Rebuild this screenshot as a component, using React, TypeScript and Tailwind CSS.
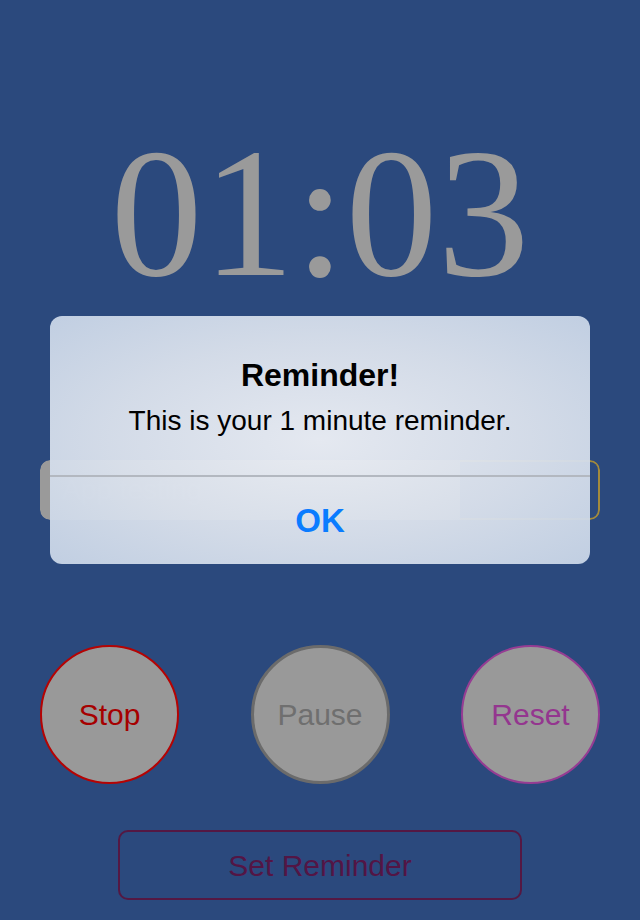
import React from "react";

export default function App() {
  const sans = { fontFamily: '"Liberation Sans", Arial, Helvetica, sans-serif' };
  return (
    <div className="relative w-[640px] h-[920px] bg-[#2b497d] overflow-hidden" style={sans}>
      <div className="flex flex-col items-center">
        <div
          className="mt-[118px] h-[190px] flex items-center justify-center text-[184px] leading-none text-[#9a9a9a]"
          style={{ fontFamily: '"Liberation Serif", "DejaVu Serif", serif' }}
        >
          01:03
        </div>

        <div className="mt-[152px] w-[560px] h-[60px] flex rounded-[10px] overflow-hidden">
          <div className="flex-1 flex items-center bg-[#9a9a9a] rounded-l-[10px] pl-[22px] text-[28px] text-[#a9a9a9]">
            App testing
          </div>
          <div className="w-[140px] border-2 border-l-0 border-[#a38a3c] rounded-r-[10px]" />
        </div>

        <div className="mt-[125px] w-[560px] flex justify-between">
          <div className="w-[139px] h-[139px] rounded-full bg-[#999999] border-2 border-[#b50303] flex items-center justify-center text-[30px] text-[#a60000]">
            Stop
          </div>
          <div className="w-[139px] h-[139px] rounded-full bg-[#999999] border-[3px] border-[#6b6b6b] flex items-center justify-center text-[30px] text-[#6f6f6f]">
            Pause
          </div>
          <div className="w-[139px] h-[139px] rounded-full bg-[#999999] border-2 border-[#963c93] flex items-center justify-center text-[30px] text-[#94368f]">
            Reset
          </div>
        </div>

        <div className="mt-[46px] w-[404px] h-[70px] rounded-[10px] border-2 border-[#541843] flex items-center justify-center text-[30px] text-[#531545]">
          Set Reminder
        </div>
      </div>

      <div className="absolute left-[50px] top-[316px] w-[540px] h-[248px] rounded-[12px] overflow-hidden flex flex-col bg-[radial-gradient(ellipse_at_center,rgba(236,239,245,0.96)_0%,rgba(218,225,236,0.96)_55%,rgba(199,212,230,0.96)_100%)]">
        <div className="h-[159px] flex flex-col items-center pt-[40px]">
          <div className="text-[32px] font-bold text-black leading-[38px]">Reminder!</div>
          <div className="mt-[10px] text-[28px] text-black leading-[34px]">This is your 1 minute reminder.</div>
        </div>
        <div className="h-[2px] bg-[#b3b8c0]" />
        <div className="flex-1 flex items-center justify-center text-[33px] font-bold text-[#0a7cff]">OK</div>
      </div>
    </div>
  );
}
